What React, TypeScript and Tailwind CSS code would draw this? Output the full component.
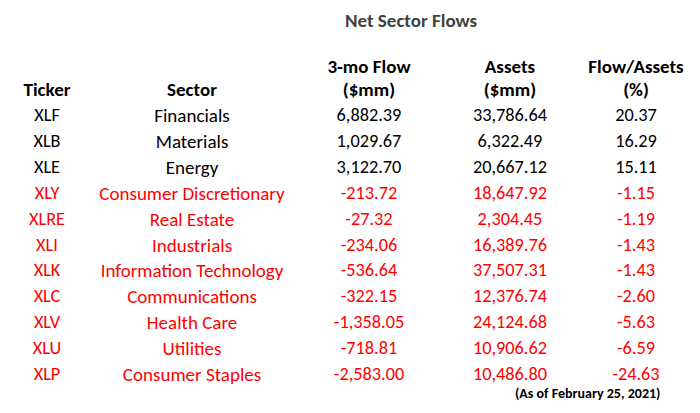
import React from "react";

type Row = { t: string; s: string; f: string; a: string; p: string; red: boolean };

const rows: Row[] = [
  { t: "XLF", s: "Financials", f: "6,882.39", a: "33,786.64", p: "20.37", red: false },
  { t: "XLB", s: "Materials", f: "1,029.67", a: "6,322.49", p: "16.29", red: false },
  { t: "XLE", s: "Energy", f: "3,122.70", a: "20,667.12", p: "15.11", red: false },
  { t: "XLY", s: "Consumer Discretionary", f: "-213.72", a: "18,647.92", p: "-1.15", red: true },
  { t: "XLRE", s: "Real Estate", f: "-27.32", a: "2,304.45", p: "-1.19", red: true },
  { t: "XLI", s: "Industrials", f: "-234.06", a: "16,389.76", p: "-1.43", red: true },
  { t: "XLK", s: "Information Technology", f: "-536.64", a: "37,507.31", p: "-1.43", red: true },
  { t: "XLC", s: "Communications", f: "-322.15", a: "12,376.74", p: "-2.60", red: true },
  { t: "XLV", s: "Health Care", f: "-1,358.05", a: "24,124.68", p: "-5.63", red: true },
  { t: "XLU", s: "Utilities", f: "-718.81", a: "10,906.62", p: "-6.59", red: true },
  { t: "XLP", s: "Consumer Staples", f: "-2,583.00", a: "10,486.80", p: "-24.63", red: true },
];

const grid = "grid grid-cols-[94px_196px_158px_124px_128px] text-center";

export default function App() {
  return (
    <div
      className="w-[700px] h-[413px] bg-white overflow-hidden text-black"
      style={{ fontFamily: "Carlito, Calibri, Lato, 'Open Sans', sans-serif" }}
    >
      <div className="pt-[8px] pl-[345px] text-[19px] leading-[26px] font-bold text-[#404040] whitespace-nowrap">
        Net Sector Flows
      </div>
      <div className={`${grid} mt-[21px] text-[19px] leading-[23px] font-bold`}>
        <div className="col-start-3">3-mo Flow</div>
        <div>Assets</div>
        <div>Flow/Assets</div>
        <div>Ticker</div>
        <div>Sector</div>
        <div>($mm)</div>
        <div>($mm)</div>
        <div>(%)</div>
      </div>
      <div className="mt-[2px] text-[18.3px] leading-[25.9px]">
        {rows.map((r) => (
          <div key={r.t} className={`${grid} ${r.red ? "text-[#ff0000]" : "text-black"}`}>
            <div>{r.t}</div>
            <div className="whitespace-nowrap text-[19px]">{r.s}</div>
            <div>{r.f}</div>
            <div>{r.a}</div>
            <div>{r.p}</div>
          </div>
        ))}
      </div>
      <div className="-mt-[3px] pl-[515px] text-[14px] leading-[18px] font-bold whitespace-nowrap">
        (As of February 25, 2021)
      </div>
    </div>
  );
}
